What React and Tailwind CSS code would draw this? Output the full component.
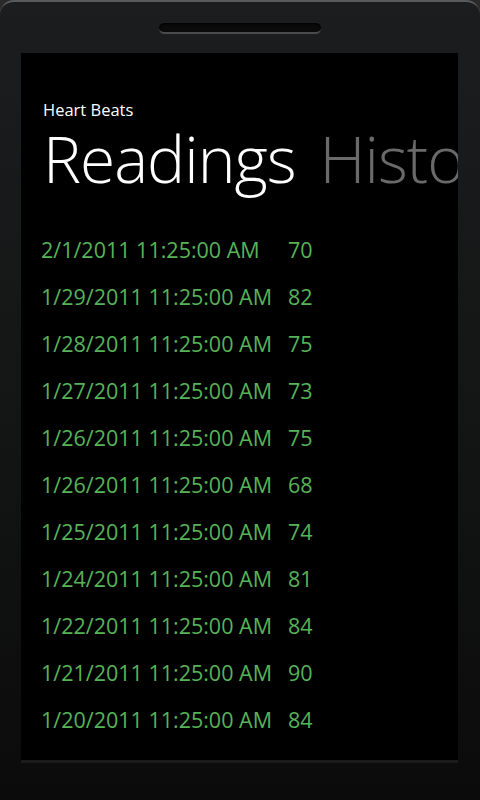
import React from 'react';

const readings = [
  ['2/1/2011 11:25:00 AM', 70],
  ['1/29/2011 11:25:00 AM', 82],
  ['1/28/2011 11:25:00 AM', 75],
  ['1/27/2011 11:25:00 AM', 73],
  ['1/26/2011 11:25:00 AM', 75],
  ['1/26/2011 11:25:00 AM', 68],
  ['1/25/2011 11:25:00 AM', 74],
  ['1/24/2011 11:25:00 AM', 81],
  ['1/22/2011 11:25:00 AM', 84],
  ['1/21/2011 11:25:00 AM', 90],
  ['1/20/2011 11:25:00 AM', 84],
];

const App = () => {
  return (
    <div className="w-[480px] h-[800px] bg-[#2a2a2a] overflow-hidden" style={{ fontFamily: '"Open Sans", "Noto Sans", sans-serif' }}>
      <div className="w-full h-full rounded-t-[14px] border-t-2 border-[#5a5a5a] bg-gradient-to-b from-[#1c1d1e] via-[#141515] to-[#0b0b0b] flex flex-col">
        {/* speaker slot */}
        <div className="h-[51px] flex justify-center pt-[21px]">
          <div className="w-[162px] h-[11px] rounded-full bg-[#0a0a0a] border-b-2 border-[#4a4b4d] shadow-[inset_0_1px_2px_rgba(0,0,0,0.9)]" />
        </div>

        {/* screen */}
        <div className="ml-[21px] w-[437px] h-[710px] bg-black overflow-hidden border-b-[3px] border-[#1b1b1b]">
          <div className="pl-[22px] pt-[46px]">
            <div className="text-[16.5px] leading-[22px] text-white">Heart Beats</div>
            <div className="flex whitespace-nowrap mt-[6px] text-[64px] leading-[64px] font-light tracking-[-1px]">
              <span className="text-white">Readings</span>
              <span className="text-[#6a6a6a] ml-[24px]">History</span>
            </div>
          </div>

          <div className="pl-[20px] pt-[36px] flex flex-col">
            {readings.map(([date, value], i) => (
              <div key={i} className="h-[47px] grid grid-cols-[247px_auto] items-center text-[21.5px] text-[#57b357]">
                <span className="whitespace-nowrap">{date}</span>
                <span>{value}</span>
              </div>
            ))}
          </div>
        </div>
      </div>
    </div>
  );
};

export default App;
